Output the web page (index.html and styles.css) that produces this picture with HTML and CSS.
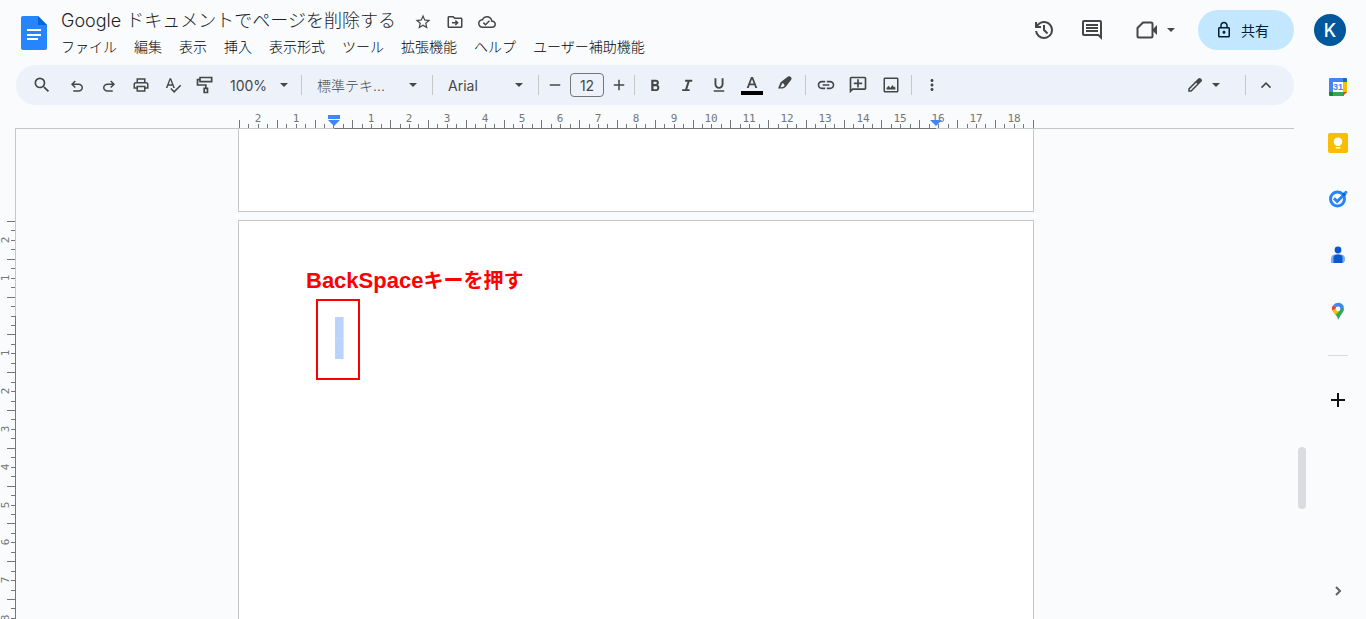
FILE: index.html
```html
<!DOCTYPE html>
<html lang="ja">
<head>
<meta charset="utf-8">
<title>Google ドキュメントでページを削除する</title>
<link rel="stylesheet" href="styles.css">
</head>
<body>
<header class="header">
  <a class="logo" href="#" aria-label="ドキュメント ホーム">
    <svg width="26" height="34" viewBox="0 0 26 34"><path fill="#2684fc" d="M2 0h15l9 9v23a2 2 0 0 1-2 2H2a2 2 0 0 1-2-2V2a2 2 0 0 1 2-2z"/><path fill="#0066da" d="M17 0l9 9h-9z"/><path fill="#fff" d="M6 13h14v2H6zm0 5h14v2H6zm0 4h11v2H6z"/></svg>
  </a>
  <div class="heading">
    <div class="title-row">
      <h1 class="title">Google ドキュメントでページを削除する</h1>
      <button class="mini" aria-label="スター"><svg class="i18" viewBox="0 0 24 24"><path d="M22 9.24l-7.19-.62L12 2 9.19 8.63 2 9.24l5.46 4.73L5.82 21 12 17.27 18.18 21l-1.63-7.03L22 9.24zM12 15.4l-3.76 2.27 1-4.28-3.32-2.88 4.38-.38L12 6.1l1.71 4.04 4.38.38-3.32 2.88 1 4.28L12 15.4z"/></svg></button>
      <button class="mini" aria-label="移動"><svg class="i18" viewBox="0 0 24 24"><path d="M20 6h-8l-2-2H4c-1.1 0-2 .9-2 2v12c0 1.1.9 2 2 2h16c1.1 0 2-.9 2-2V8c0-1.1-.9-2-2-2zm0 12H4V6h5.170l2 2H20v10z"/><path class="line" d="M8 13h7M12.500 10l3 3-3 3"/></svg></button>
      <button class="mini" aria-label="保存状況"><svg class="i18" viewBox="0 0 24 24"><path d="M19.35 10.04C18.67 6.59 15.64 4 12 4 9.11 4 6.6 5.64 5.35 8.04 2.34 8.36 0 10.91 0 14c0 3.31 2.69 6 6 6h13c2.76 0 5-2.24 5-5 0-2.64-2.05-4.78-4.65-4.96zM19 18H6c-2.21 0-4-1.79-4-4 0-2.05 1.53-3.76 3.56-3.97l1.07-.11.5-.95C8.08 7.14 9.94 6 12 6c2.62 0 4.88 1.86 5.39 4.43l.3 1.5 1.53.11c1.56.1 2.78 1.41 2.78 2.96 0 1.65-1.35 3-3 3zm-9-3.82l-2.09-2.09L6.5 13.500 10 17l6.010-6.010-1.410-1.410z"/></svg></button>
    </div>
    <nav class="menu">
      <button>ファイル</button><button>編集</button><button>表示</button><button>挿入</button><button>表示形式</button><button>ツール</button><button>拡張機能</button><button>ヘルプ</button><button>ユーザー補助機能</button>
    </nav>
  </div>
  <div class="actions">
    <button class="round" aria-label="変更履歴"><svg class="i24" viewBox="0 0 24 24"><path d="M12 21q-3.450 0-6.013-2.287T3.050 13H5.100q.350 2.600 2.313 4.300T12 19q2.925 0 4.963-2.038T19 12t-2.037-4.963T12 5q-1.725 0-3.225.8T6.250 8H9v2H3V4h2v2.350q1.275-1.600 3.113-2.475T12 3q1.875 0 3.513.713t2.850 1.924 1.925 2.850T21 12t-.712 3.513-1.925 2.850-2.850 1.925T12 21m2.800-4.800L11 12.400V7h2v4.600l3.200 3.200z"/></svg></button>
    <button class="round" aria-label="コメント"><svg class="i24" viewBox="0 0 24 24"><path d="M21.99 4c0-1.100-.890-2-1.990-2H4c-1.100 0-2 .9-2 2v12c0 1.100.9 2 2 2h14l4 4-.010-18zM20 4v13.170L18.830 16H4V4h16zM6 12h12v2H6zm0-3h12v2H6zm0-3h12v2H6z"/></svg></button>
    <button class="meet" aria-label="ビデオ通話"><svg class="i24" viewBox="0 0 24 24"><path class="line" d="M8 4.500h8a1.500 1.500 0 0 1 1.500 1.500v12a1.500 1.500 0 0 1-1.500 1.500H4A1.500 1.500 0 0 1 2.500 18v-8z"/><path d="M17 12L22 7v10z"/></svg><svg class="caret" viewBox="0 0 8 4"><path d="M0 0h8L4 4z"/></svg></button>
    <button class="share"><svg class="i18" viewBox="0 0 24 24"><path d="M18 8h-1V6c0-2.760-2.240-5-5-5S7 3.240 7 6v2H6c-1.100 0-2 .9-2 2v10c0 1.100.9 2 2 2h12c1.100 0 2-.9 2-2V10c0-1.100-.9-2-2-2zM9 6c0-1.660 1.340-3 3-3s3 1.340 3 3v2H9V6zm9 14H6V10h12v10zm-6-3c1.100 0 2-.9 2-2s-.9-2-2-2-2 .9-2 2 .9 2 2 2z"/></svg>共有</button>
    <button class="avatar" aria-label="アカウント">K</button>
  </div>
</header>
<div class="below">
  <main class="editor">
    <div class="toolbar" role="toolbar">
      <button class="tool first" aria-label="検索"><svg class="i20" viewBox="0 0 24 24"><path d="M15.500 14h-.790l-.280-.270A6.471 6.471 0 0 0 16 9.500 6.500 6.500 0 1 0 9.500 16c1.610 0 3.090-.590 4.230-1.570l.270.280v.790l5 4.990L20.490 19l-4.990-5zm-6 0C7.010 14 5 11.990 5 9.500S7.010 5 9.500 5 14 7.010 14 9.500 11.990 14 9.500 14z"/></svg></button>
      <button class="tool" aria-label="元に戻す"><svg class="i18" viewBox="0 0 24 24"><path d="M7 21v-2h7.100q1.575 0 2.737-1Q18 17 18 15.500T16.837 13Q15.675 12 14.100 12H7.800l2.600 2.600L9 16l-5-5 5-5 1.400 1.400L7.800 10h6.300q2.425 0 4.163 1.575Q20 13.150 20 15.500t-1.737 3.925Q16.525 21 14.100 21z"/></svg></button>
      <button class="tool" aria-label="やり直し"><svg class="i18" viewBox="0 0 24 24"><path transform="matrix(-1 0 0 1 24 0)" d="M7 21v-2h7.100q1.575 0 2.737-1Q18 17 18 15.500T16.837 13Q15.675 12 14.100 12H7.800l2.600 2.600L9 16l-5-5 5-5 1.400 1.400L7.800 10h6.300q2.425 0 4.163 1.575Q20 13.150 20 15.500t-1.737 3.925Q16.525 21 14.100 21z"/></svg></button>
      <button class="tool" aria-label="印刷"><svg class="i18" viewBox="0 0 24 24"><path d="M19 8h-1V3H6v5H5c-1.660 0-3 1.340-3 3v6h4v4h12v-4h4v-6c0-1.660-1.340-3-3-3zM8 5h8v3H8V5zm8 12v2H8v-4h8v2zm2-2v-2H6v2H4v-4c0-.550.450-1 1-1h14c.550 0 1 .450 1 1v4h-2z"/></svg></button>
      <button class="tool" aria-label="スペルチェック"><svg class="i18" viewBox="0 0 24 24"><path d="M12.450 16h2.090L9.430 3H7.570L2.460 16h2.090l1.120-3h5.640l1.140 3zm-6.020-5L8.500 5.480 10.570 11H6.430zm15.160.590l-8.090 8.090L9.830 16l-1.410 1.410 5.090 5.090L23 13l-1.410-1.410z"/></svg></button>
      <button class="tool" aria-label="書式を貼り付け"><svg class="i20" viewBox="0 0 24 24"><path class="line" d="M6 3h14v5H6zM6 5.500H3V12h10v4M11 16h4v5h-4z"/></svg></button>
      <span class="pick zoom"><select aria-label="ズーム"><option>100%</option></select><svg class="caret" viewBox="0 0 8 4"><path d="M0 0h8L4 4z"/></svg></span>
      <span class="sep"></span>
      <span class="pick para"><select aria-label="スタイル"><option>標準テキ...</option></select><svg class="caret" viewBox="0 0 8 4"><path d="M0 0h8L4 4z"/></svg></span>
      <span class="sep"></span>
      <span class="pick font"><select aria-label="フォント"><option>Arial</option></select><svg class="caret" viewBox="0 0 8 4"><path d="M0 0h8L4 4z"/></svg></span>
      <span class="sep"></span>
      <button class="step" aria-label="フォントサイズを縮小"><svg class="i18" viewBox="0 0 24 24"><path d="M5 11h14v2H5z"/></svg></button>
      <input class="size" type="text" value="12" aria-label="フォントサイズ">
      <button class="step" aria-label="フォントサイズを拡大"><svg class="i18" viewBox="0 0 24 24"><path d="M11 5h2v6h6v2h-6v6h-2v-6H5v-2h6z"/></svg></button>
      <span class="sep"></span>
      <button class="tool" aria-label="太字"><svg class="i18" viewBox="0 0 24 24"><path d="M15.600 11.790c.970-.670 1.650-1.770 1.650-2.790 0-2.260-1.750-4-4-4H7v15h7.040c2.090 0 3.710-1.700 3.710-4.290 0-1.520-.860-3.320-2.150-3.920zM10 7.500h3c.830 0 1.500.670 1.500 1.500s-.670 1.500-1.500 1.500h-3v-3zm3.500 10H10v-4h3.500c.830 0 1.500.670 1.500 2s-.670 2-1.500 2z"/></svg></button>
      <button class="tool" aria-label="斜体"><svg class="i18" viewBox="0 0 24 24"><path d="M9.500 5v2.500h3.200L9.500 17.500H5.500V20h10v-2.500h-3.200l3.200-10h3.500V5z"/></svg></button>
      <button class="tool" aria-label="下線"><svg class="i18" viewBox="0 0 24 24"><path d="M12 17c3.310 0 6-2.690 6-6V3h-2.500v8c0 1.930-1.570 3.500-3.500 3.500S8.500 12.930 8.500 11V3H6v8c0 3.310 2.690 6 6 6zm-7 2v2h14v-2H5z"/></svg></button>
      <button class="tool wide" aria-label="テキストの色"><svg width="22" height="20" viewBox="0 0 22 20"><path d="M10 2h2l4.300 11h-2l-1-2.800H8.700l-1 2.800h-2zm1 2.200L9.300 8.500h3.400z"/><path fill="#000" d="M0 16h22v4H0z"/></svg></button>
      <button class="tool wide" aria-label="ハイライトの色"><svg width="18" height="20" viewBox="0 0 18 20"><path d="M2 13.500l2.600-6.200L12 1.600q1.500-1 2.900.3t.3 2.900L9.600 12 7 13.500zM6 8.700l-1.500 3.600 2.600-.4 1.600-1.500-1.700-2.300z" fill-rule="evenodd"/></svg></button>
      <span class="sep"></span>
      <button class="tool" aria-label="リンクを挿入"><svg class="i20" viewBox="0 0 24 24"><path d="M3.900 12c0-1.710 1.390-3.100 3.100-3.100h4V7H7c-2.760 0-5 2.240-5 5s2.240 5 5 5h4v-1.900H7c-1.710 0-3.100-1.390-3.100-3.100zM8 13h8v-2H8v2zm9-6h-4v1.900h4c1.710 0 3.100 1.390 3.100 3.100s-1.390 3.100-3.100 3.100h-4V17h4c2.760 0 5-2.240 5-5s-2.240-5-5-5z"/></svg></button>
      <button class="tool" aria-label="コメントを追加"><svg class="i20" viewBox="0 0 24 24"><path d="M20 2H4c-1.100 0-2 .9-2 2v18l4-4h14c1.100 0 2-.9 2-2V4c0-1.100-.9-2-2-2zm0 14H5.170L4 17.170V4h16v12zM11 5h2v4h4v2h-4v4h-2v-4H7V9h4z"/></svg></button>
      <button class="tool wide" aria-label="画像を挿入"><svg class="i18" viewBox="0 0 24 24"><path d="M20 4v16H4V4h16m0-2H4c-1.100 0-2 .9-2 2v16c0 1.100.9 2 2 2h16c1.100 0 2-.9 2-2V4c0-1.100-.9-2-2-2z"/><path d="M6 18v-2l3-3 2 3 3-4 2 3 1.500-1 .500 4z"/></svg></button>
      <span class="sep"></span>
      <button class="tool" aria-label="その他"><svg class="i18" viewBox="0 0 24 24"><path d="M12 8c1.100 0 2-.9 2-2s-.9-2-2-2-2 .9-2 2 .9 2 2 2zm0 2c-1.100 0-2 .9-2 2s.9 2 2 2 2-.9 2-2-.9-2-2-2zm0 6c-1.100 0-2 .9-2 2s.9 2 2 2 2-.9 2-2-.9-2-2-2z"/></svg></button>
      <button class="mode" aria-label="編集モード"><svg class="i18" viewBox="0 0 24 24"><path d="M5 19h1.400l8.600-8.600L13.600 9 5 17.600zM3 21v-4.300L15.700 4l1.300-1q.6-.3 1.300-.3.800 0 1.400.6l1 1q.6.6.6 1.400 0 .7-.3 1.300L7.300 21z"/></svg><svg class="caret" viewBox="0 0 8 4"><path d="M0 0h8L4 4z"/></svg></button>
      <span class="sep"></span>
      <button class="tool" aria-label="メニューを非表示"><svg class="i18" viewBox="0 0 24 24"><path class="line" d="M6 15.500l6-6 6 6"/></svg></button>
    </div>
    <div class="ruler-h"><svg id="hruler" width="796" height="24" viewBox="0 0 796 24" aria-hidden="true"></svg></div>
    <div class="workspace">
      <div class="ruler-v"><svg id="vruler" width="16" height="490" viewBox="0 0 16 490" aria-hidden="true"></svg></div>
      <div class="pages">
        <section class="page page-end"></section>
        <section class="page page-next">
          <p class="note"><span class="key">BackSpace</span>キーを押す</p>
          <div class="callout"><span class="selection"></span><span class="selection"></span></div>
        </section>
      </div>
      <div class="scroll"><div class="thumb"></div></div>
    </div>
  </main>
  <aside class="rail">
    <button aria-label="カレンダー"><svg class="i20" viewBox="0 0 20 20"><path fill="#4285f4" d="M2 1h14v4H5v11H1V2q0-1 1-1z"/><path fill="#1967d2" d="M15 1h3q1 0 1 1v3h-4z"/><path fill="#fbbc04" d="M15 5h4v11h-4z"/><path fill="#34a853" d="M5 15h11v4H5z"/><path fill="#188038" d="M1 15h4v4H2q-1 0-1-1z"/><path fill="#ea4335" d="M15 15h4l-4 4z"/><path fill="#fff" d="M5 5h10v10H5z"/><text x="10" y="13" text-anchor="middle" class="cal">31</text></svg></button>
    <button aria-label="Keep"><svg class="i20" viewBox="0 0 20 20"><rect width="20" height="20" rx="2" fill="#fbbc04"/><path fill="#fff" d="M10 4.500a4.200 4.200 0 0 1 2.200 7.800V13H7.800v-.7A4.200 4.200 0 0 1 10 4.500zM7.800 14h4.400v1.500H7.800z"/></svg></button>
    <button aria-label="ToDo リスト"><svg class="i20" viewBox="0 0 20 20"><circle cx="9.500" cy="10" r="7" fill="none" stroke="#2684fc" stroke-width="3"/><path d="M6 9.300l3.200 3.200 8-8" fill="none" stroke="#2684fc" stroke-width="3"/><path fill="#0066da" d="M14 5.300l2-2 2.400 2-2.400 2.400z"/><circle cx="17.800" cy="3.200" r="1.500" fill="#2684fc"/></svg></button>
    <button aria-label="連絡先"><svg class="i20" viewBox="0 0 20 20"><circle cx="10" cy="5" r="3.400" fill="#0b57d0"/><path fill="#7baaf7" d="M3 18v-4q0-4.500 4-4.500h6q4 0 4 4.500 0 4-3 4z"/><path fill="#0b57d0" d="M5.500 18v-5q0-3.500 3.500-3.500h2q3.500 0 3.500 3.500v5z"/></svg></button>
    <button aria-label="マップ"><svg class="i20" viewBox="0 0 20 20"><path fill="#34a853" d="M10 19q0-3-3.500-6.500L14 3.200A6.300 6.300 0 0 1 16 8q0 2-2 4.500T10 19z"/><path fill="#fbbc04" d="M6.500 12.500Q5 11 4.300 9.500L8 5.500l4 4-4.500 4.500z"/><path fill="#ea4335" d="M4.300 9.500Q3 6 5.400 3.900L9 7z"/><path fill="#4285f4" d="M5.400 3.900Q7.500 1.500 11 1.700q3.500.4 4.700 4L12 9 9 7z"/><circle cx="10" cy="7.800" r="2.400" fill="#fff"/></svg></button>
    <span class="rule"></span>
    <button class="add" aria-label="アドオンを取得"><svg class="i24" viewBox="0 0 24 24"><path fill="#111" d="M11 5h2v6h6v2h-6v6h-2v-6H5v-2h6z"/></svg></button>
    <button class="hide" aria-label="サイドパネルを非表示"><svg class="i20" viewBox="0 0 20 20"><path class="line" d="M8 6l4 4-4 4"/></svg></button>
  </aside>
</div>
<script src="ruler.js"></script>
</body>
</html>
```
FILE: styles.css
```css
* { box-sizing: border-box; }
body {
  margin: 0;
  height: 100vh;
  display: flex;
  flex-direction: column;
  overflow: hidden;
  background: #f9fbfd;
  color: #1f1f1f;
  font-family: Inter, "Noto Sans CJK JP", sans-serif;
  font-size: 14px;
}
button, select, input { font: inherit; color: inherit; background: none; border: 0; padding: 0; margin: 0; }
button { display: flex; align-items: center; justify-content: center; }
svg { display: block; flex: none; fill: #444746; }
.line { fill: none; stroke: #444746; stroke-width: 2; }
.i18 { width: 18px; height: 18px; }
.i20 { width: 20px; height: 20px; }
.i24 { width: 24px; height: 24px; }
.caret { width: 8px; height: 4px; }

.header { display: flex; height: 65px; padding: 0 20px; flex: none; }
.logo { padding: 16px 1px; }
.heading { padding: 9px 0 0 13px; }
.title-row { display: flex; align-items: center; gap: 14px; height: 24px; }
.title { margin: 0 4px 0 0; font-size: 18px; line-height: 24px; font-weight: 300; white-space: nowrap; }
.mini { width: 18px; height: 18px; }
.mini svg { margin-top: 2px; }
.menu { display: flex; gap: 17px; padding: 4px 0 0; }
.menu button { height: 20px; line-height: 20px; font-weight: 300; white-space: nowrap; color: #000; }
.actions { display: flex; align-items: center; height: 60px; margin-left: auto; }
.round { width: 48px; height: 40px; }
.meet { gap: 8px; width: 48px; height: 40px; margin: 0 19px 0 15px; }
.share { gap: 8px; width: 96px; height: 40px; margin-right: 20px; padding-right: 8px; border-radius: 20px; background: #c2e7ff; color: #001d35; }
.share svg { fill: #001d35; }
.avatar { width: 32px; height: 32px; border-radius: 50%; background: #01579b; color: #fff; font-size: 18px; font-weight: 500; }

.below { display: flex; flex: 1; min-height: 0; }
.editor { display: flex; flex-direction: column; flex: 1; min-width: 0; }
.toolbar { display: flex; align-items: center; flex: none; height: 40px; margin: 0 16px; padding: 0 12px 0 10px; border-radius: 20px; background: #edf2fa; color: #444746; }
.tool { width: 32px; height: 32px; flex: none; }
.first { margin-right: 3px; }
.wide { width: 33px; }
.sep { width: 1px; height: 20px; margin: 0 4px 0 3px; flex: none; background: #c7c7c7; }
.tool + .sep { margin-left: 4px; }
.pick { display: grid; align-items: center; height: 32px; flex: none; }
.pick select, .pick .caret { grid-area: 1 / 1; }
.pick select { appearance: none; width: 100%; height: 32px; padding-left: 11px; }
.pick .caret { justify-self: end; margin-right: 12px; pointer-events: none; }
.zoom { width: 77px; }
.zoom select { padding-left: 9px; }
.zoom .caret { margin-right: 10px; }
.para { width: 123px; font-weight: 300; }
.font { width: 98px; }
.step { width: 24px; height: 24px; flex: none; }
.step + .size { margin: 0 3px; }
.size { width: 34px; height: 24px; border: 1px solid #747775; border-radius: 4px; text-align: center; }
.mode { gap: 8px; height: 32px; margin: 0 22px 0 auto; }

.ruler-h { display: flex; justify-content: center; flex: none; height: 24px; margin: 0 16px 0 15px; padding-right: 37px; box-shadow: inset 0 -1px #c4c7c5; }
.ruler-v { height: 100%; overflow: hidden; box-shadow: inset -1px 0 #c4c7c5; }
.tick { fill: #747775; }
.mark { fill: #4285f4; }
.num { font-family: "DejaVu Sans Mono", monospace; font-size: 11px; fill: #747775; text-anchor: middle; }
.workspace { display: grid; grid-template-columns: 16px 1fr 16px; flex: 1; min-height: 0; overflow: hidden; }
.pages { display: flex; flex-direction: column; align-items: center; gap: 8px; min-height: 0; padding-right: 38px; overflow: hidden; }
.page { width: 796px; flex: none; border: 1px solid #c7c7c7; background: #fff; }
.page-end { height: 83px; border-top: 0; }
.page-next { height: 1123px; padding: 48px 67px; }
.note { margin: 0; font-family: "Liberation Sans", "Noto Sans CJK JP", sans-serif; font-size: 20px; line-height: 24px; font-weight: 700; color: #f00; }
.key { font-size: 22px; }
.callout { display: flex; flex-direction: column; width: 44px; height: 81px; margin: 6px 0 0 10px; padding: 16px 17px; border: 2px solid #f00; }
.selection { width: 9px; height: 21px; background: #bad3fd; border-right: 1px solid #d6e4fd; }
.selection + .selection { border-top: 1px solid #c6dafc; }
.scroll { padding: 318px 4px 0; }
.thumb { height: 62px; border-radius: 4px; background: #dadce0; }

.rail { display: flex; flex-direction: column; align-items: center; flex: none; width: 56px; padding: 12px 0 18px; gap: 36px; }
.rail button { width: 20px; height: 20px; flex: none; }
.rule { width: 20px; height: 1px; flex: none; margin: -2px 0; background: #dadce0; }
.rail .hide { margin-top: auto; }
.hide .line { stroke: #5f6368; }
.cal { font-family: "Liberation Sans", sans-serif; font-size: 9px; font-weight: 700; fill: #4285f4; }
```
FILE: ruler.js
```js
(function () {
  var NS = 'http://www.w3.org/2000/svg';
  var CM = 37.8;

  function add(parent, name, attrs, text) {
    var el = document.createElementNS(NS, name);
    for (var key in attrs) el.setAttribute(key, attrs[key]);
    if (text) el.textContent = text;
    parent.appendChild(el);
  }

  // Ticks every quarter centimetre, the half-centimetre ones long.
  function eachTick(from, to, zero, draw) {
    for (var q = from * 4; q <= to * 4; q++) {
      draw(Math.floor(zero + q * CM / 4), Math.abs(q % 4) === 2, q % 4 === 0 && q !== 0 ? String(Math.abs(q / 4)) : '');
    }
  }

  var h = document.getElementById('hruler');
  eachTick(-2.5, 18.5, 95.9, function (x, long, label) {
    var len = long ? 8 : 4;
    add(h, 'rect', { 'class': 'tick', x: x, y: 23 - len, width: 1, height: len });
    if (label) add(h, 'text', { 'class': 'num', x: x, y: 17 }, label);
  });
  add(h, 'rect', { 'class': 'tick', x: 96, y: 23, width: 602, height: 1 });
  add(h, 'path', { 'class': 'mark', d: 'M90 10h12v4H90zM90 15h12l-6 6z' });
  add(h, 'path', { 'class': 'mark', d: 'M692 15h12l-6 6z' });

  var v = document.getElementById('vruler');
  eachTick(-2.5, 8, 187, function (y, long, label) {
    var len = long ? 8 : 4;
    add(v, 'rect', { 'class': 'tick', x: 15 - len, y: y, width: len, height: 1 });
    if (label) add(v, 'text', { 'class': 'num', transform: 'translate(9 ' + y + ') rotate(-90)' }, label);
  });
  add(v, 'rect', { 'class': 'tick', x: 15, y: 187, width: 1, height: 303 });
})();
```
